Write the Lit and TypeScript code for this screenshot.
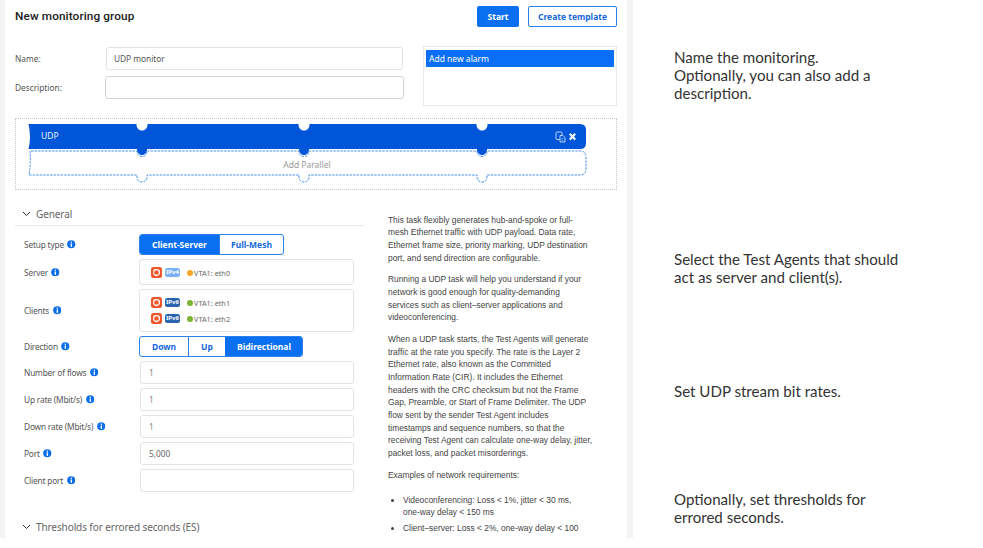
import { LitElement, html, css, svg } from "lit";
import { customElement } from "lit/decorators.js";

const info = html`<svg class="info" viewBox="0 0 9 9"><circle cx="4.5" cy="4.5" r="4.3" fill="#0a6fe8"/><rect x="3.9" y="3.7" width="1.4" height="3.6" fill="#fff"/><rect x="3.9" y="1.7" width="1.4" height="1.3" fill="#fff"/></svg>`;

const ubuntu = html`<svg class="ubu" viewBox="0 0 11 11"><rect width="11" height="11" rx="2.5" fill="#f2562a"/><circle cx="5.5" cy="5.5" r="2.9" fill="none" stroke="#fff" stroke-width="1.1"/><circle cx="8.2" cy="4" r=".8" fill="#fff"/><circle cx="3.2" cy="3.2" r=".8" fill="#fff"/><circle cx="5" cy="8.4" r=".8" fill="#fff"/></svg>`;

function agent(v: string, name: string, dot: string) {
  return html`<div class="agent">${ubuntu}<span class="badge ${v}">${v === "v4" ? "IPv4" : "IPv6"}</span><span class="dot ${dot}"></span><span>VTA1: ${name}</span></div>`;
}

const chevron = html`<svg class="chev" viewBox="0 0 9 6"><path d="M1 1l3.5 3.5L8 1" fill="none" stroke="#333" stroke-width="1"/></svg>`;

const notches = [142, 304, 482];
const dashPath = (() => {
  let d = "M31 151H136.5";
  for (const n of notches) d += `H${n - 5}c0 3.5 2 5.5 5 5.5s5-2 5-5.5`;
  d += "H580q6 0 6 6V169q0 6-6 6";
  for (const n of [...notches].reverse()) d += `H${n + 5}v2c0 3-2 5-5 5s-5-2-5-5v-2`;
  d += "H29q2-12 1-24";
  return d;
})();

const diagram = html`<svg class="diagram" viewBox="15 118 602 71">
  <path d=${dashPath} fill="none" stroke="#4a94ee" stroke-width="1" stroke-dasharray="2.5 1"/>
  <path d="M28.5 124H580q6 0 6 6v13q0 6-6 6H28.5q3-12 0-25z" fill="#0055d9"/>
  ${notches.map((n) => svg`
    <path d="M${n - 5.5} 124c0 4 2 6.5 5.5 6.5s5.5-2.5 5.5-6.5z" fill="#fff"/>
    <path d="M${n - 5} 149c0 3.5 2 6 5 6s5-2.5 5-6z" fill="#0055d9"/>`)}
  <g fill="none" stroke="#b9d0f3" stroke-width="1">
    <rect x="556" y="132" width="6" height="7.5" rx="1"/>
    <path d="M560 135.5h3l2 2v4.5h-5z" fill="#0055d9"/>
    <path d="M561.5 138.5h2M561.5 140.3h2" stroke-width=".6"/>
  </g>
  <path d="M569 134.5l1.5-1.5 2 2 2-2 1.5 1.5-2 2.2 2 2.1-1.5 1.7-2-2.2-2 2.2-1.500-1.700 2-2.100z" fill="#eef4fd"/>
  <text x="41" y="139" class="udp">UDP</text>
  <text x="307" y="168" class="parallel" text-anchor="middle">Add Parallel</text>
</svg>`;

@customElement("app-root")
export class AppRoot extends LitElement {
  static styles = css`
    :host { display: flex; width: 983px; height: 548px; overflow: hidden; background: #fff; font-family: "Noto Sans", sans-serif; color: #555; }
    .panelwrap { width: 633px; height: 538px; overflow: hidden; background: #f3f3f6; padding-left: 5px; padding-right: 6px; box-sizing: border-box; flex: none; }
    .panel { background: #fff; height: 538px; overflow: hidden; position: relative; }

    .head { display: flex; align-items: center; height: 21px; padding: 6px 10px 0 10px; }
    .title { font: 500 11.8px Roboto, sans-serif; color: #222; flex: 1; letter-spacing: .1px; margin-bottom: 2px; }
    .btn { box-sizing: border-box; height: 21px; border-radius: 2px; font: 700 8.5px "Noto Sans", sans-serif; display: flex; align-items: center; justify-content: center; }
    .start { width: 42px; background: #0a6ff0; color: #fff; margin-right: 9px; }
    .tmpl { width: 89px; border: 1px solid #2b80ee; color: #1668dc; }

    .top { display: flex; padding: 19px 10px 0 10px; height: 60px; }
    .fields { width: 399px; display: flex; flex-direction: column; gap: 6px; padding-top: 1px; flex: none; }
    .frow { display: flex; align-items: center; font-size: 8.3px; height: 23px; }
    .frow label { width: 90px; color: #555; }
    .tinput { box-sizing: border-box; height: 23px; border: 1px solid #e4e4e4; border-radius: 3px; width: 297px; padding-left: 7px; display: flex; align-items: center; color: #555; font-size: 8.3px; margin-left: 1px; }
    .desc .tinput { width: 299px; border-color: #d2d2d2; margin-left: 0; }
    .alarm { box-sizing: border-box; width: 194px; height: 60px; margin-left: 9px; border: 1px solid #e8e8e8; padding: 3px 2px; flex: none; }
    .alarm div { height: 17px; background: #0a6ff5; color: #fff; font-size: 8.5px; line-height: 18px; padding-left: 3px; }

    .canvas { box-sizing: border-box; margin: 12px 10px 0 10px; height: 72px; border: 1px dotted #c8c8c8; overflow: visible; }
    .diagram { display: block; width: 602px; height: 71px; margin: -1px 0 0 -1px; overflow: visible; }
    .udp { font: 8.5px "Noto Sans", sans-serif; fill: #e8f0ff; }
    .parallel { font: 8.5px "Noto Sans", sans-serif; fill: #999; }

    .body { display: flex; margin-top: 13px; }
    .left { width: 349px; margin-left: 10px; flex: none; }
    .sect { display: flex; align-items: center; height: 23px; font-size: 10px; letter-spacing: -.1px; color: #666; padding-left: 7px; box-sizing: border-box; }
    .sect.general { border-bottom: 1px solid #e6e6e6; padding-bottom: 1px; }
    .chev { width: 9px; height: 6px; margin-right: 5px; flex: none; }
    .rows { display: flex; flex-direction: column; gap: 4px; padding: 8px 0 0 9px; }
    .row { display: flex; align-items: center; font-size: 8.3px; letter-spacing: -.17px; color: #555; }
    .lbl { width: 115px; display: flex; align-items: center; gap: 3.5px; flex: none; }
    .info { width: 8.5px; height: 8.5px; flex: none; }
    .seg { display: flex; height: 21px; box-sizing: border-box; border: 1px solid #2b80ee; border-radius: 3px; overflow: hidden; font: 700 8.5px "Noto Sans", sans-serif; letter-spacing: 0; color: #1668dc; }
    .seg span { display: flex; align-items: center; justify-content: center; box-sizing: border-box; border-left: 1px solid #2b80ee; }
    .seg span:first-child { border-left: 0; }
    .seg .on { background: #0a6ff0; color: #fff; border-left-color: #0a6ff0; }
    .box { box-sizing: border-box; width: 215px; border: 1px solid #e4e4e4; border-radius: 3px; padding: 7px 0 0 11px; display: flex; flex-direction: column; gap: 5px; }
    .agent { display: flex; align-items: center; height: 11px; font-size: 7.3px; letter-spacing: 0; color: #666; }
    .ubu { width: 11px; height: 11px; flex: none; margin-right: 3px; }
    .badge { width: 15px; height: 9px; border-radius: 2.5px; color: #fff; font: 700 6px/9px "Noto Sans", sans-serif; text-align: center; margin-right: 7px; }
    .badge.v4 { background: #7ab0f5; }
    .badge.v6 { background: #2a64b0; }
    .dot { width: 6px; height: 6px; border-radius: 50%; margin-right: 1px; }
    .dot.o { background: #f5a623; }
    .dot.g { background: #7cb32e; }
    .num { box-sizing: border-box; margin-left: 1px; width: 214px; height: 23px; border: 1px solid #e4e4e4; border-radius: 3px; padding-left: 8px; display: flex; align-items: center; font-size: 8.3px; letter-spacing: 0; color: #666; }
    .num.dim { color: #888; }
    .sect.thr { margin-top: 23px; }

    .help { margin-left: 24px; width: 205px; padding-top: 10.5px; font: 8.4px/12.67px "Liberation Sans", Arial, sans-serif; color: #444; }
    .help p { margin: 0 0 9px 0; }
    .help ul { margin: 12.5px 0 0 0; padding: 0 4px 0 15px; }
    .help li { margin-bottom: 2.5px; }

    .notes { padding-left: 41px; font: 15.1px/18px Lato, sans-serif; color: #333; display: flex; flex-direction: column; }
    .notes div { white-space: pre-line; }
    .n1 { margin-top: 48px; }
    .n2 { margin-top: 148px; }
    .n3 { margin-top: 96px; }
    .n4 { margin-top: 90px; }
  `;

  render() {
    const lab = (t: string) => html`<div class="lbl"><span>${t}</span>${info}</div>`;
    return html`
      <div class="panelwrap">
        <div class="panel">
          <div class="head">
            <div class="title">New monitoring group</div>
            <div class="btn start">Start</div>
            <div class="btn tmpl">Create template</div>
          </div>
          <div class="top">
            <div class="fields">
              <div class="frow"><label>Name:</label><div class="tinput">UDP monitor</div></div>
              <div class="frow desc"><label>Description:</label><div class="tinput"></div></div>
            </div>
            <div class="alarm"><div>Add new alarm</div></div>
          </div>
          <div class="canvas">${diagram}</div>
          <div class="body">
            <div class="left">
              <div class="sect general">${chevron}General</div>
              <div class="rows">
                <div class="row">${lab("Setup type")}
                  <div class="seg"><span class="on" style="width:79px">Client-Server</span><span style="width:64px">Full-Mesh</span></div></div>
                <div class="row">${lab("Server")}<div class="box" style="height:26px">${agent("v4", "eth0", "o")}</div></div>
                <div class="row">${lab("Clients")}<div class="box" style="height:43px">${agent("v6", "eth1", "g")}${agent("v6", "eth2", "g")}</div></div>
                <div class="row">${lab("Direction")}
                  <div class="seg"><span style="width:48px">Down</span><span style="width:37px">Up</span><span class="on" style="width:77px">Bidirectional</span></div></div>
                <div class="row">${lab("Number of flows")}<div class="num dim">1</div></div>
                <div class="row">${lab("Up rate (Mbit/s)")}<div class="num dim">1</div></div>
                <div class="row">${lab("Down rate (Mbit/s)")}<div class="num dim">1</div></div>
                <div class="row">${lab("Port")}<div class="num">5,000</div></div>
                <div class="row">${lab("Client port")}<div class="num"></div></div>
              </div>
              <div class="sect thr">${chevron}Thresholds for errored seconds (ES)</div>
            </div>
            <div class="help">
              <p>This task flexibly generates hub-and-spoke or full-mesh Ethernet traffic with UDP payload. Data rate, Ethernet frame size, priority marking, UDP destination port, and send direction are configurable.</p>
              <p>Running a UDP task will help you understand if your network is good enough for quality-demanding<br />services such as client–server applications and videoconferencing.</p>
              <p>When a UDP task starts, the Test Agents will generate traffic at the rate you specify. The rate is the Layer 2 Ethernet rate, also known as the Committed Information Rate (CIR). It includes the Ethernet headers with the CRC checksum but not the Frame Gap, Preamble, or Start of Frame Delimiter. The UDP flow sent by the sender Test Agent includes timestamps and sequence numbers, so that the receiving Test Agent can calculate one-way delay, jitter, packet loss, and packet misorderings.</p>
              <p>Examples of network requirements:</p>
              <ul>
                <li>Videoconferencing: Loss &lt; 1%, jitter &lt; 30 ms, one-way delay &lt; 150 ms</li>
                <li>Client–server: Loss &lt; 2%, one-way delay &lt; 100 ms</li>
              </ul>
            </div>
          </div>
        </div>
      </div>
      <div class="notes">
        <div class="n1">Name the monitoring.
Optionally, you can also add a
description.</div>
        <div class="n2">Select the Test Agents that should
act as server and client(s).</div>
        <div class="n3">Set UDP stream bit rates.</div>
        <div class="n4">Optionally, set thresholds for
errored seconds.</div>
      </div>
    `;
  }
}
